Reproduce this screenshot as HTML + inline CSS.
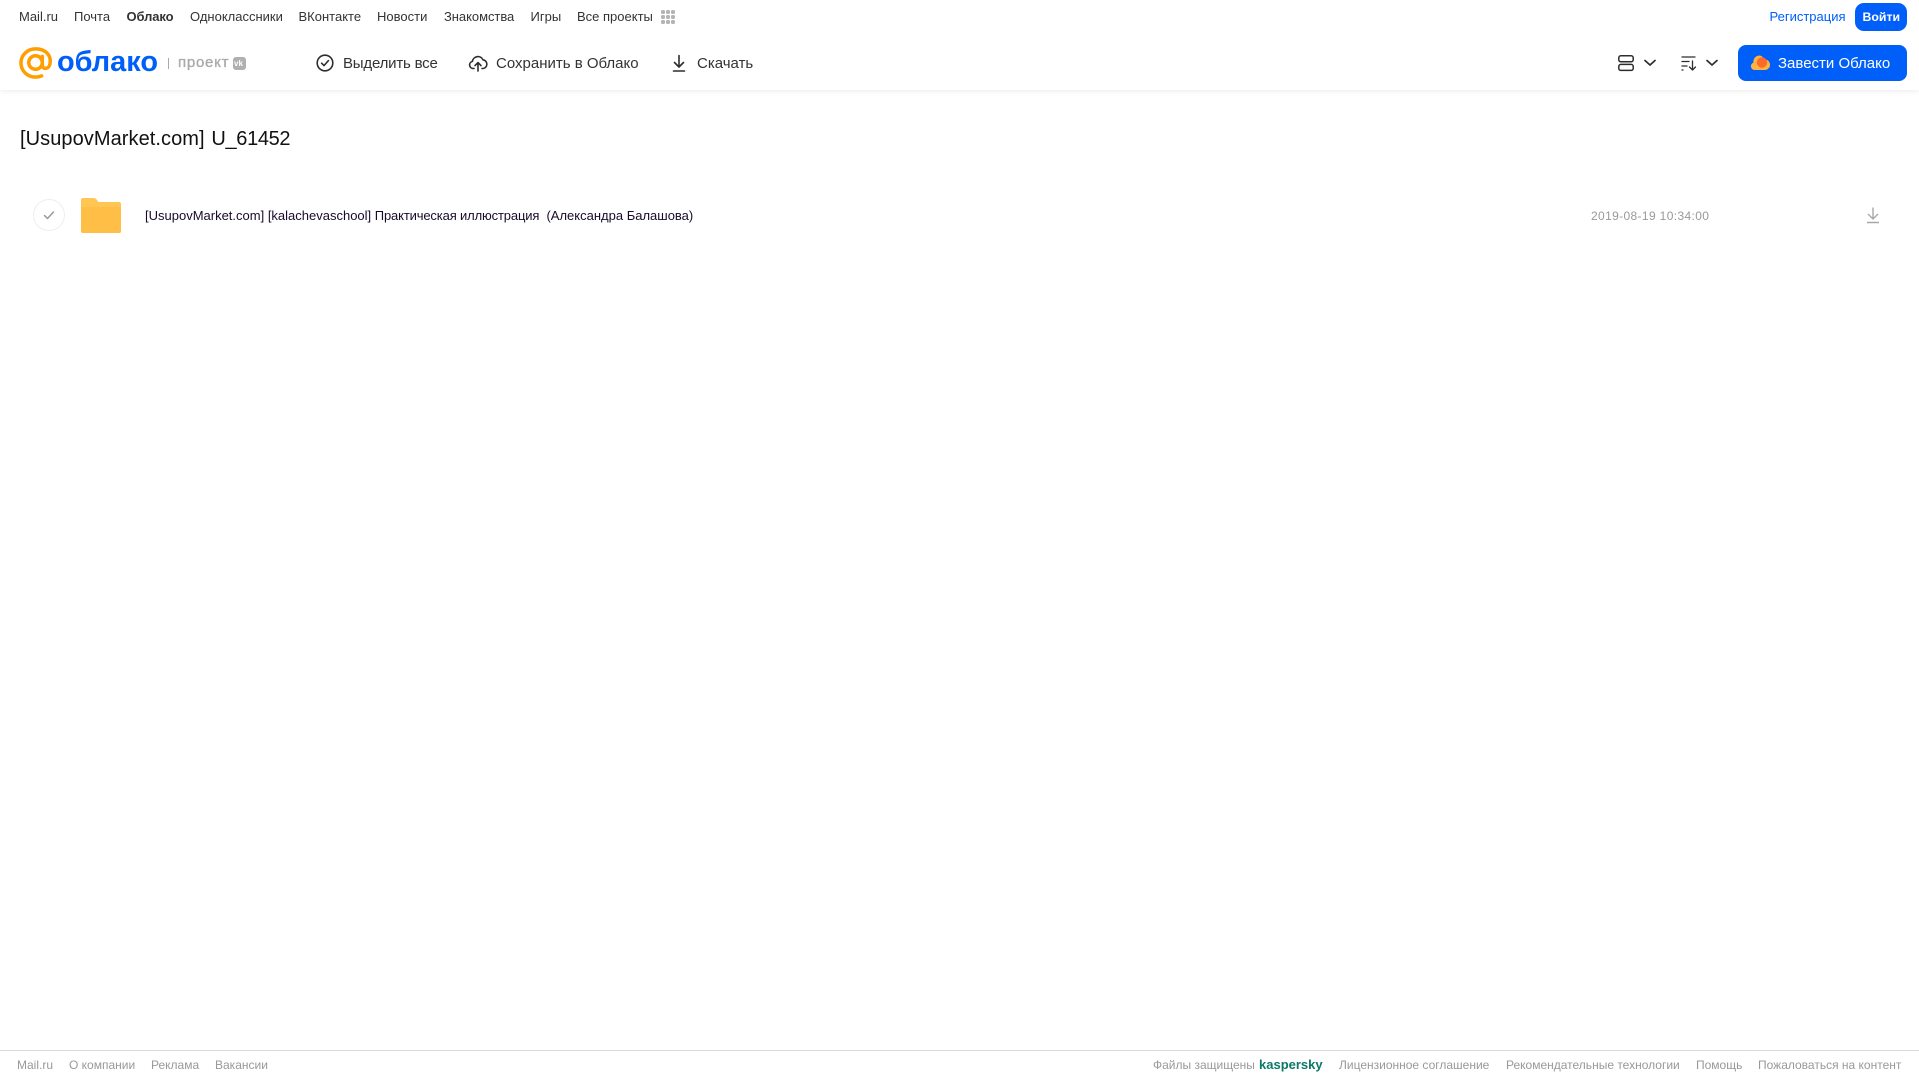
<!DOCTYPE html>
<html lang="ru">
<head>
<meta charset="utf-8">
<title>Облако</title>
<style>
html,body{margin:0;padding:0;background:#fff;width:1919px;height:1079px;overflow:hidden}
body{position:relative;font-family:"Liberation Sans","Noto Sans CJK SC",sans-serif;color:#333}
.t{position:absolute;white-space:nowrap;line-height:18px}
.n{top:8px;font-size:13px;color:#333}
.a{top:54.500px;font-size:15px;color:#333}
.f{top:1056px;font-size:12px;color:#999}
svg{position:absolute;display:block}
#hd{position:absolute;left:0;top:0;width:1919px;height:90px;background:#fff;box-shadow:0 1px 5px rgba(0,0,0,.08)}
</style>
</head>
<body>
<div id="hd"></div>

<span class="t n" style="left:19px">Mail.ru</span>
<span class="t n" style="left:74px">Почта</span>
<span class="t n" style="left:126.500px;font-weight:bold;letter-spacing:-.1px">Облако</span>
<span class="t n" style="left:190px">Одноклассники</span>
<span class="t n" style="left:298.500px">ВКонтакте</span>
<span class="t n" style="left:377px">Новости</span>
<span class="t n" style="left:444px;letter-spacing:-.05px">Знакомства</span>
<span class="t n" style="left:530.500px">Игры</span>
<span class="t n" style="left:577px">Все проекты</span>
<svg style="left:660px;top:9px" width="16" height="16" fill="#b4b4b4">
<rect x="1" y="1" width="4" height="4" rx="1.500"/><rect x="6" y="1" width="4" height="4" rx="1.500"/><rect x="11" y="1" width="4" height="4" rx="1.500"/>
<rect x="1" y="6" width="4" height="4" rx="1.500"/><rect x="6" y="6" width="4" height="4" rx="1.500"/><rect x="11" y="6" width="4" height="4" rx="1.500"/>
<rect x="1" y="11" width="4" height="4" rx="1.500"/><rect x="6" y="11" width="4" height="4" rx="1.500"/><rect x="11" y="11" width="4" height="4" rx="1.500"/>
</svg>

<span class="t n" style="left:1769.500px;color:#005ff9">Регистрация</span>
<div style="position:absolute;left:1855px;top:3px;width:52px;height:28px;background:#005ff9;border-radius:9px"></div>
<span class="t n" style="left:1862.500px;color:#fff;font-weight:bold;font-size:12.300px">Войти</span>

<!-- logo -->
<svg style="left:18.500px;top:46.500px" width="34" height="32" viewBox="0 0 36 34" fill="none">
<circle cx="17.500" cy="16.500" r="7.200" stroke="#ff9e00" stroke-width="3.700"/>
<path d="M24.700 10v9.500c0 4.500 6.800 4.500 8-1 2.200-9.500-4.500-16.500-15-16.500C8.500 2 2 9 2 17s6.500 15 15.500 15c2.500 0 4.500-.4 6.500-1.300" stroke="#ff9e00" stroke-width="3.700" stroke-linecap="round"/>
</svg>
<svg style="left:55px;top:44px" width="108" height="38">
<text x="2" y="27" font-family="Liberation Sans, sans-serif" font-size="29" font-weight="bold" fill="#005ff9" textLength="101" lengthAdjust="spacingAndGlyphs">облако</text>
</svg>
<div style="position:absolute;left:168px;top:58px;width:1px;height:11px;background:#aaa"></div>
<span class="t" style="left:178px;top:54px;font-size:15px;color:#aaa;letter-spacing:.75px;-webkit-text-stroke:.35px #aaa">проект</span>
<div style="position:absolute;left:233px;top:57px;width:13px;height:13px;background:#b0b0b0;border-radius:3px"></div>
<span class="t" style="left:234px;top:59px;font-size:8px;line-height:9px;font-weight:bold;color:#fff">vk</span>

<!-- actions -->
<svg style="left:315px;top:53px" width="20" height="20" fill="none" stroke="#2c2d2e" stroke-width="1.600">
<circle cx="10" cy="10" r="7.800"/>
<path d="M6.600 10.200l2.400 2.400 4.400-5" stroke-linecap="round" stroke-linejoin="round"/>
</svg>
<span class="t a" style="left:343px;letter-spacing:-.2px">Выделить все</span>

<svg style="left:468px;top:53px" width="20" height="20" fill="none" stroke="#2c2d2e" stroke-width="1.600" stroke-linecap="round" stroke-linejoin="round">
<path d="M6 15.500H5a3.600 3.600 0 0 1-.6-7.100A5.600 5.600 0 0 1 15 6.800a4.400 4.400 0 0 1 .2 8.700H14"/>
<path d="M10 18v-8M7 12.600L10 9.600l3 3"/>
</svg>
<span class="t a" style="left:496px">Сохранить в Облако</span>

<svg style="left:669px;top:53px" width="20" height="20" fill="none" stroke="#2c2d2e" stroke-width="1.600" stroke-linecap="round" stroke-linejoin="round">
<path d="M10 2.500v11M5.500 9.500l4.500 4.500 4.500-4.500M4.500 18h11"/>
</svg>
<span class="t a" style="left:697px">Скачать</span>

<!-- view / sort -->
<svg style="left:1617px;top:54px" width="18" height="18" fill="none" stroke="#2c2d2e" stroke-width="1.500">
<rect x="1.800" y="1.800" width="14.400" height="6" rx="2"/>
<rect x="1.800" y="10.400" width="14.400" height="6" rx="2"/>
</svg>
<svg style="left:1643px;top:58px" width="14" height="10" fill="none" stroke="#2c2d2e" stroke-width="1.700" stroke-linecap="round" stroke-linejoin="round">
<path d="M2 2.500l5 4.500 5-4.500"/>
</svg>
<svg style="left:1680px;top:54px" width="18" height="18" fill="none" stroke="#2c2d2e" stroke-width="1.300" stroke-linecap="round" stroke-linejoin="round">
<path d="M2 3h13M2 7.500h7M2 12h5M2 16h1M12.500 7v9M9.500 13l3 3 3-3"/>
</svg>
<svg style="left:1705px;top:58px" width="14" height="10" fill="none" stroke="#2c2d2e" stroke-width="1.700" stroke-linecap="round" stroke-linejoin="round">
<path d="M2 2.500l5 4.500 5-4.500"/>
</svg>

<div style="position:absolute;left:1738px;top:45px;width:169px;height:36px;background:#005ff9;border-radius:8px"></div>
<svg style="left:1750px;top:54px" width="20" height="17">
<path d="M4.500 16a3.800 3.800 0 0 1-1-7.400A6 6 0 0 1 9 1.500a5 5 0 0 1 5 4 5.300 5.300 0 0 1 1.500 10.500z" fill="#ffb340"/>
<circle cx="12" cy="8.500" r="5.200" fill="#ff6a28"/>
</svg>
<span class="t" style="left:1778px;top:54.500px;font-size:15px;color:#fff">Завести Облако</span>

<!-- title -->
<span class="t" style="left:20px;top:127px;font-size:20px;line-height:24px;color:#111"><span style="letter-spacing:.07px">[UsupovMarket.com]</span><span style="margin-left:1.200px"> </span><span style="letter-spacing:-.34px">U_61452</span></span>

<!-- row -->
<div style="position:absolute;left:33px;top:199px;width:30px;height:30px;border:1px solid #eee;border-radius:50%"></div>
<svg style="left:41px;top:208px" width="16" height="14" fill="none" stroke="#999" stroke-width="1.500" stroke-linecap="round" stroke-linejoin="round">
<path d="M3.500 7.500l3 3 6-6.500"/>
</svg>
<svg style="left:81px;top:198px" width="40" height="35">
<path d="M2 0h10c2 0 3 .7 4 2l1.500 2H38a2 2 0 0 1 2 2v27a2 2 0 0 1-2 2H2a2 2 0 0 1-2-2V2a2 2 0 0 1 2-2z" fill="#ffc654"/>
<path d="M0 9h40v24a2 2 0 0 1-2 2H2a2 2 0 0 1-2-2z" fill="#ffbe45"/>
</svg>
<span class="t" style="left:145px;top:206.500px;font-size:13px;color:#1a0a2a">[UsupovMarket.com] [kalachevaschool] <span style="letter-spacing:-.15px">Практическая иллюстрация</span>&nbsp; (Александра Балашова)</span>
<span class="t" style="left:1591px;top:206.500px;font-size:12px;color:#999;letter-spacing:.36px">2019-08-19 10:34:00</span>
<svg style="left:1865px;top:206px" width="16" height="18" fill="none" stroke="#a8a8a8" stroke-width="1.400" stroke-linejoin="round">
<path d="M8 1.500v11M3 8l5 5 5-5M2 16.500h12"/>
</svg>

<!-- footer -->
<div style="position:absolute;left:0;top:1050px;width:1919px;height:1px;background:#d9d9d9"></div>
<span class="t f" style="left:17px">Mail.ru</span>
<span class="t f" style="left:69px">О компании</span>
<span class="t f" style="left:151px">Реклама</span>
<span class="t f" style="left:215px">Вакансии</span>
<span class="t f" style="left:1153px">Файлы защищены</span>
<span class="t f" style="left:1259px;color:#0a7a66;font-weight:bold;font-size:13px">kaspersky</span>
<span class="t f" style="left:1339px">Лицензионное соглашение</span>
<span class="t f" style="left:1506px">Рекомендательные технологии</span>
<span class="t f" style="left:1696px">Помощь</span>
<span class="t f" style="left:1758px">Пожаловаться на контент</span>
</body>
</html>
